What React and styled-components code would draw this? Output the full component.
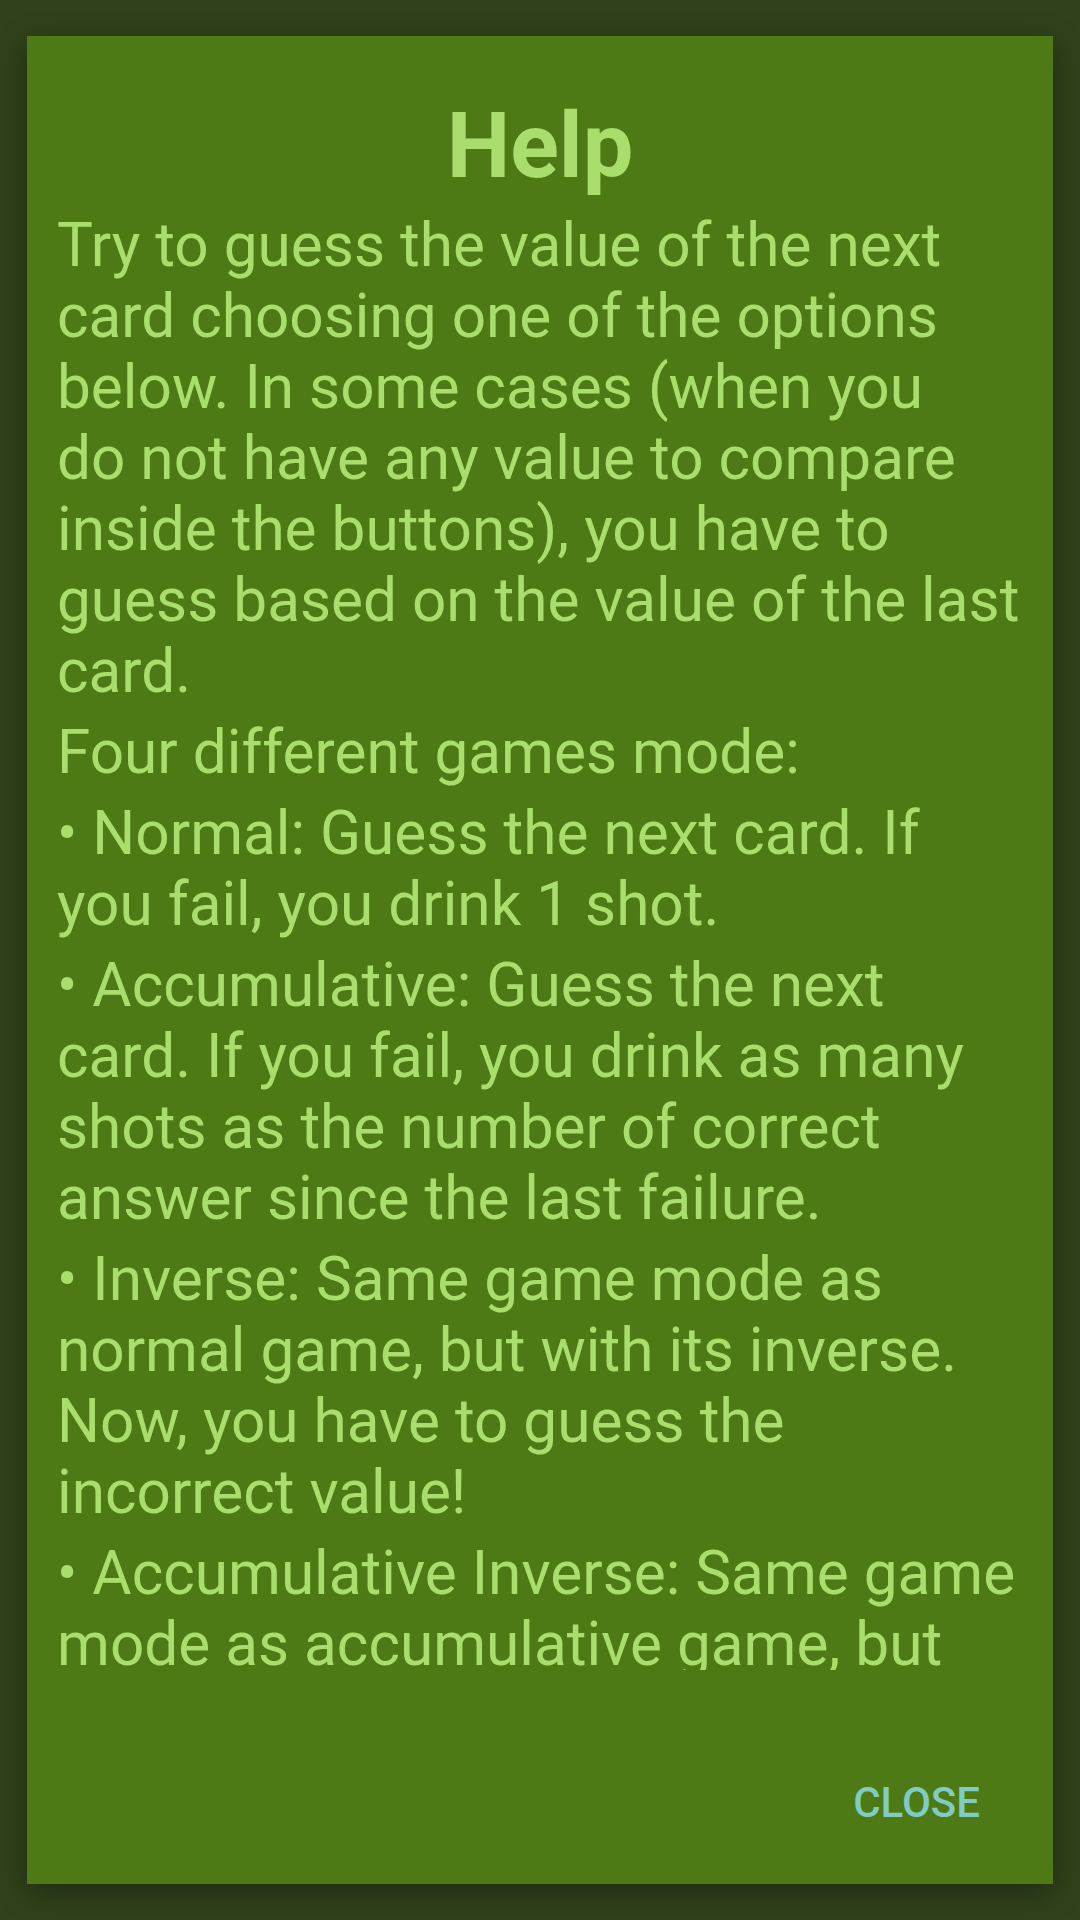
import styled, { createGlobalStyle } from 'styled-components';

const GlobalStyle = createGlobalStyle`
  html, body {
    margin: 0;
    padding: 0;
  }

  body {
    font-family: Roboto, "Noto Sans", "Liberation Sans", sans-serif;
  }
`;

// Android breaks these paragraphs with its own balanced strategy, so the
// first one keeps its line breaks explicitly.
const paragraphs = [
  [
    'Try to guess the value of the next',
    'card choosing one of the options',
    'below. In some cases (when you',
    'do not have any value to compare',
    'inside the buttons), you have to',
    'guess based on the value of the last',
    'card.',
  ],
  ['Four different games mode:'],
  ['• Normal: Guess the next card. If you fail, you drink 1 shot.'],
  ['• Accumulative: Guess the next card. If you fail, you drink as many shots as the number of correct answer since the last failure.'],
  ['• Inverse: Same game mode as normal game, but with its inverse. Now, you have to guess the incorrect value!'],
  ['• Accumulative Inverse: Same game mode as accumulative game, but with its inverse. You drink as many shots as the number of correct answer since the last failure.'],
];

export default function App() {
  return (
    <>
      <GlobalStyle />
      <Screen>
        <Dialog>
          <Title>Help</Title>
          <HelpScroll>
            {paragraphs.map((lines, i) => (
              <HelpText key={i}>
                {lines.map((line, j) => (
                  <span key={j}>
                    {j > 0 && <br />}
                    {line}
                  </span>
                ))}
              </HelpText>
            ))}
          </HelpScroll>
          <Actions>
            <TextButton>Close</TextButton>
          </Actions>
        </Dialog>
      </Screen>
    </>
  );
}

const Screen = styled.div`
  width: 1080px;
  height: 1920px;
  box-sizing: border-box;
  padding: 36px 27px;
  background: #30421b;
`;

const Dialog = styled.div`
  height: 1848px;
  display: flex;
  flex-direction: column;
  background: #4d7a14;
  box-shadow: 0 8px 28px rgba(0, 0, 0, 0.35);
`;

const Title = styled.h1`
  margin: 0;
  padding-top: 58px;
  text-align: center;
  font-size: 90px;
  font-weight: 700;
  line-height: 105px;
  color: #a9dd6d;
`;

const HelpScroll = styled.div`
  flex: 1;
  overflow: hidden;
  margin-top: 11px;
  padding: 0 28px 0 30px;
`;

const HelpText = styled.p`
  margin: 0 0 10px;
  font-size: 60.3px;
  line-height: 71px;
  color: #a9dd6d;
`;

const Actions = styled.div`
  height: 214px;
  box-sizing: border-box;
  display: flex;
  justify-content: flex-end;
  align-items: flex-start;
  padding: 108px 73px 0 0;
`;

const TextButton = styled.button`
  border: none;
  background: none;
  padding: 0;
  font-family: Roboto, "Liberation Sans", sans-serif;
  font-size: 42px;
  font-weight: 500;
  line-height: 49px;
  text-transform: uppercase;
  color: #80cbc4;
  cursor: pointer;
`;
